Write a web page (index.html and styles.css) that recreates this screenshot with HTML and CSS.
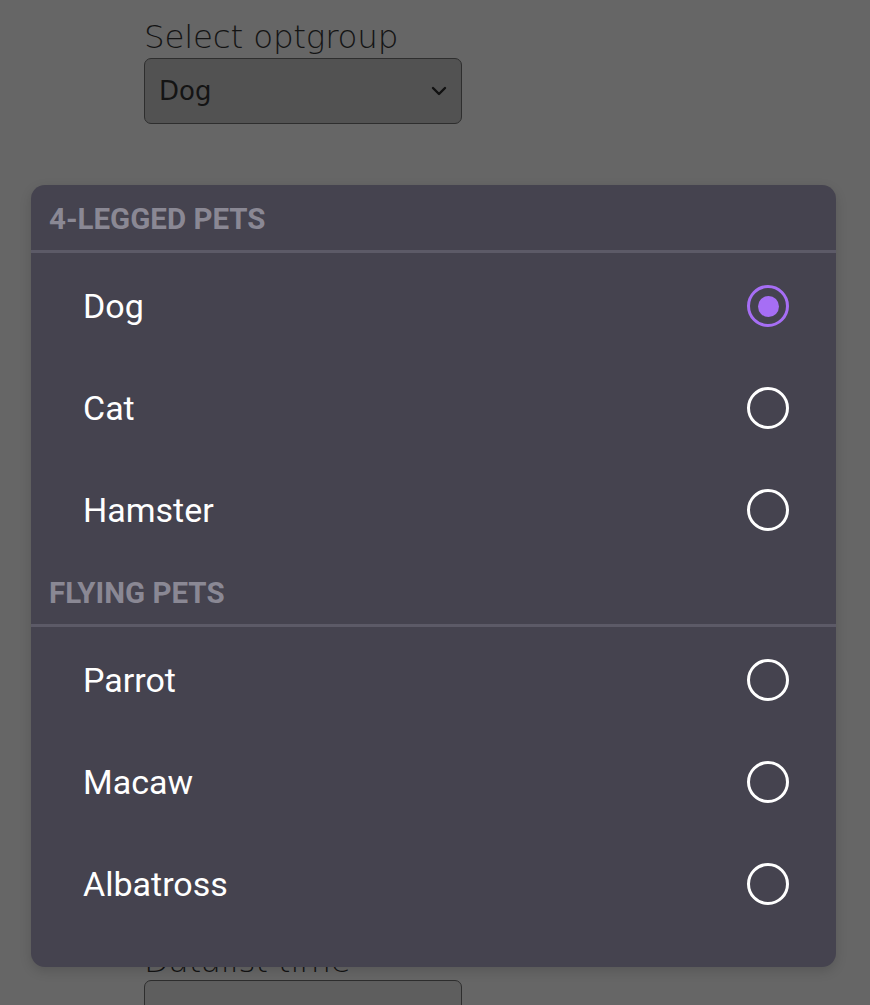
FILE: index.html
```html
<!DOCTYPE html>
<html>
<head>
<meta charset="utf-8">
<link rel="stylesheet" href="styles.css">
</head>
<body>
<main class="page">
  <div class="field">
    <label class="field-label">Select optgroup</label>
    <div class="select">
      <span class="select-value">Dog</span>
      <svg class="chevron" width="16" height="10" viewBox="0 0 16 10"><path d="M2 2 L8 8 L14 2" fill="none" stroke="#111" stroke-width="2.4" stroke-linecap="round" stroke-linejoin="round"/></svg>
    </div>
  </div>
  <div class="field field-datalist">
    <label class="field-label">Datalist time</label>
    <div class="input"></div>
  </div>
</main>

<div class="dialog" role="listbox">
  <div class="group-header">4-LEGGED PETS</div>
  <div class="divider"></div>
  <div class="option"><span>Dog</span><span class="radio checked"></span></div>
  <div class="option"><span>Cat</span><span class="radio"></span></div>
  <div class="option"><span>Hamster</span><span class="radio"></span></div>
  <div class="group-header">FLYING PETS</div>
  <div class="divider"></div>
  <div class="option"><span>Parrot</span><span class="radio"></span></div>
  <div class="option"><span>Macaw</span><span class="radio"></span></div>
  <div class="option"><span>Albatross</span><span class="radio"></span></div>
</div>
</body>
</html>
```

FILE: styles.css
```css
html, body {
  margin: 0;
  padding: 0;
  background: #666666;
  height: 100%;
  overflow: hidden;
}

.page {
  padding: 18px 0 0 144px;
  font-family: "DejaVu Sans", sans-serif;
  color: #141414;
}

.field {
  display: flex;
  flex-direction: column;
  width: 318px;
}

.field-label {
  font-size: 32.5px;
  font-weight: 300;
  line-height: 38px;
  letter-spacing: -0.2px;
}

.select {
  box-sizing: border-box;
  height: 66px;
  margin-top: 2px;
  border: 1.5px solid #2e2e2e;
  border-radius: 7px;
  background: #525252;
  display: flex;
  align-items: center;
  justify-content: space-between;
  padding: 0 14px 0 14px;
}

.select-value {
  font-size: 26px;
}

.field-datalist {
  margin-top: 818px;
}

.input {
  box-sizing: border-box;
  height: 66px;
  margin-top: 0;
  border: 1.5px solid #2e2e2e;
  border-radius: 7px;
  background: #5e5e5e;
}

.dialog {
  position: absolute;
  left: 31px;
  top: 185px;
  width: 805px;
  box-sizing: border-box;
  padding: 2px 0 32px;
  background: #45434f;
  border-radius: 14px;
  box-shadow: 0 4px 12px rgba(0,0,0,0.15);
  font-family: Roboto, "Noto Sans", sans-serif;
}

.group-header {
  height: 63px;
  display: flex;
  align-items: center;
  padding-left: 18px;
  color: #8a8894;
  font-weight: 700;
  font-size: 29.5px;
}

.divider {
  height: 3px;
  margin-bottom: 2px;
  background: #5c5a67;
}

.option {
  height: 102px;
  display: flex;
  align-items: center;
  justify-content: space-between;
  padding: 0 47px 0 52px;
  color: #ffffff;
  font-size: 34px;
}

.radio {
  box-sizing: border-box;
  width: 42px;
  height: 42px;
  border: 3.5px solid #ffffff;
  border-radius: 50%;
  position: relative;
}

.radio.checked {
  border-color: #a66ef5;
}

.radio.checked::after {
  content: "";
  position: absolute;
  left: 50%;
  top: 50%;
  width: 21px;
  height: 21px;
  margin: -10.5px 0 0 -10.5px;
  border-radius: 50%;
  background: #a66ef5;
}
```
